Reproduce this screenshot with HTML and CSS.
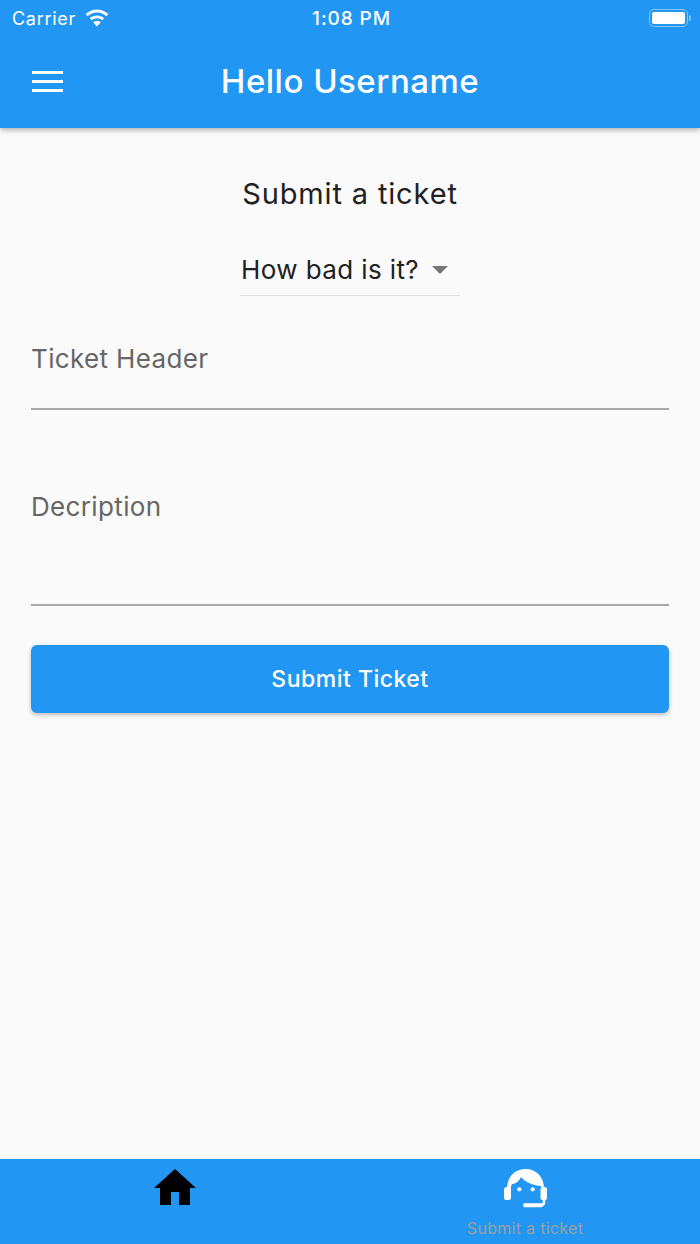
FILE: index.html
```html
<!DOCTYPE html>
<html lang="en">
<head>
  <meta charset="UTF-8" />
  <meta name="viewport" content="width=device-width, initial-scale=1.0"/>
  <title>Submit a ticket</title>
  <link rel="stylesheet" href="styles.css">
</head>
<body>
  <div class="app">
    <!-- Header -->
    <header class="app-header">
      <div class="status-bar">
        <div class="status-left">
          <span>Carrier</span>
          <svg class="wifi-icon" width="26" height="18" viewBox="0 0 26 18">
            <path d="M13 3.600c3.600 0 6.900 1.400 9.400 3.700l2-2.200C21.300 2.200 17.300 .5 13 .5S4.700 2.200 1.600 5.100l2 2.200C6.100 5 9.400 3.600 13 3.600z" fill="#fff"/>
            <path d="M13 9.200c2.100 0 3.900 .7 5.300 2l1.900-2.100C18.300 7.400 15.800 6.400 13 6.400s-5.300 1-7.200 2.700l1.900 2.100c1.400-1.300 3.200-2 5.300-2z" fill="#fff"/>
            <path d="M13 17.500l3.800-4.200c-1-.9-2.300-1.400-3.800-1.400s-2.800 .5-3.800 1.400z" fill="#fff"/>
          </svg>
        </div>
        <span class="status-time">1:08 PM</span>
        <div class="battery">
          <div class="battery-body"><div class="battery-fill"></div></div>
          <div class="battery-cap"></div>
        </div>
      </div>
      <div class="toolbar">
        <button class="menu-btn" aria-label="Menu">
          <span></span><span></span><span></span>
        </button>
        <h1>Hello Username</h1>
      </div>
    </header>

    <!-- Ticket form -->
    <main class="content">
      <h2>Submit a ticket</h2>
      <div class="dropdown">
        <span>How bad is it?</span>
        <span class="dropdown-arrow"></span>
      </div>
      <div class="field field-header">Ticket Header</div>
      <div class="field field-desc">Decription</div>
      <button class="submit-btn">Submit Ticket</button>
    </main>

    <!-- Bottom nav -->
    <nav class="bottom-nav">
      <div class="nav-item">
        <svg width="42" height="36" viewBox="0 0 42 36">
          <path d="M21 0L0 19h6v17h11V23h8v13h11V19h6z" fill="#000"/>
        </svg>
      </div>
      <div class="nav-item">
        <svg class="headset" width="43" height="39" viewBox="0 0 43 39">
          <path d="M21.500 0C10.500 0 3 8 3 20h37C40 8 32.500 0 21.500 0z" fill="#fff"/>
          <path d="M6.500 32V22c0-3 .5-5 1.500-7 4 0 7-3 9-7 4 5 12 8.500 20 9 .5 1.500 .5 3 .5 5v10z" fill="#2196f3"/>
          <rect x="0" y="18" width="7" height="13" rx="2.500" fill="#fff"/>
          <rect x="36.500" y="18" width="6.500" height="13" rx="2.500" fill="#fff"/>
          <circle cx="15.300" cy="20.300" r="2.100" fill="#fff"/>
          <circle cx="28.700" cy="20.300" r="2.100" fill="#fff"/>
          <path d="M40 30v3c0 2-1 3-2.500 3.300" fill="none" stroke="#fff" stroke-width="2.500"/>
          <rect x="19.300" y="34.300" width="19.300" height="4" rx="1.200" fill="#fff"/>
        </svg>
        <span class="nav-label">Submit a ticket</span>
      </div>
    </nav>
  </div>
</body>
</html>
```

FILE: styles.css
```css
:root {
  --blue: #2196f3;
  --bg: #fafafa;
  --text: #212121;
  --hint: #666;
}

* {
  box-sizing: border-box;
}

body {
  margin: 0;
  background-color: var(--bg);
  font-family: Inter, "Noto Sans", sans-serif;
  color: var(--text);
}

.app {
  display: flex;
  flex-direction: column;
  height: 1244px;
  overflow: hidden;
}

/* Header */
.app-header {
  height: 128px;
  background-color: var(--blue);
  color: white;
  box-shadow: 0 2px 5px rgba(0,0,0,0.3);
  position: relative;
}

.status-bar {
  display: grid;
  grid-template-columns: 1fr auto 1fr;
  align-items: center;
  height: 36px;
  padding: 0 9px 0 12px;
  font-size: 18px;
  letter-spacing: 0.7px;
}

.status-left {
  display: flex;
  align-items: center;
  gap: 8px;
}

.wifi-icon {
  margin-top: -1px;
}

.status-time {
  font-weight: 500;
  font-size: 19px;
  letter-spacing: 0.9px;
}

.battery {
  display: flex;
  align-items: center;
  justify-content: flex-end;
  gap: 1px;
}

.battery-body {
  width: 39px;
  height: 18px;
  padding: 2px;
  border: 1.5px solid rgba(255,255,255,0.45);
  border-radius: 5px;
}

.battery-fill {
  height: 100%;
  background: white;
  border-radius: 2px;
}

.battery-cap {
  width: 2px;
  height: 6px;
  background: rgba(255,255,255,0.45);
  border-radius: 0 2px 2px 0;
}

.toolbar {
  display: flex;
  align-items: center;
  justify-content: center;
  height: 92px;
  padding-bottom: 3px;
  position: relative;
}

.toolbar h1 {
  margin: 0;
  font-size: 33px;
  font-weight: 500;
  letter-spacing: 0.5px;
}

.menu-btn {
  position: absolute;
  left: 32px;
  top: 35px;
  display: flex;
  flex-direction: column;
  gap: 6px;
  width: 31px;
  padding: 0;
  background: none;
  border: none;
}

.menu-btn span {
  display: block;
  height: 3px;
  background: white;
}

/* Form */
.content {
  flex: 1;
  display: flex;
  flex-direction: column;
  align-items: center;
  padding: 48px 31px 0 31px;
}

.content h2 {
  margin: 0;
  font-size: 29px;
  font-weight: 400;
  line-height: 36px;
  letter-spacing: 0.85px;
}

.dropdown {
  display: flex;
  align-items: center;
  width: 220px;
  height: 48px;
  margin-top: 36px;
  padding-left: 1px;
  font-size: 26px;
  letter-spacing: 0.4px;
  border-bottom: 1px solid #e0e0e0;
  gap: 13px;
  padding-bottom: 4px;
}

.dropdown-arrow {
  width: 0;
  height: 0;
  border-left: 8px solid transparent;
  border-right: 8px solid transparent;
  border-top: 8px solid #757575;
}

.field {
  width: 100%;
  font-size: 26px;
  letter-spacing: 0.35px;
  color: var(--hint);
  border-bottom: 2px solid #a8a8a8;
}

.field-header {
  height: 114px;
  padding-top: 47px;
}

.field-desc {
  height: 196px;
  padding-top: 81px;
}

.submit-btn {
  width: 100%;
  height: 68px;
  margin-top: 39px;
  background-color: var(--blue);
  color: white;
  border: none;
  border-radius: 6px;
  font-family: inherit;
  font-size: 23px;
  font-weight: 500;
  letter-spacing: 0.5px;
  box-shadow: 0 2px 4px rgba(0,0,0,0.25);
}

/* Bottom nav */
.bottom-nav {
  display: grid;
  grid-template-columns: 1fr 1fr;
  height: 85px;
  background-color: var(--blue);
}

.nav-item {
  display: flex;
  flex-direction: column;
  align-items: center;
  padding-top: 10px;
}

.nav-label {
  margin-top: 10px;
  font-size: 16px;
  letter-spacing: 0.3px;
  color: #9e9e9e;
}
```
